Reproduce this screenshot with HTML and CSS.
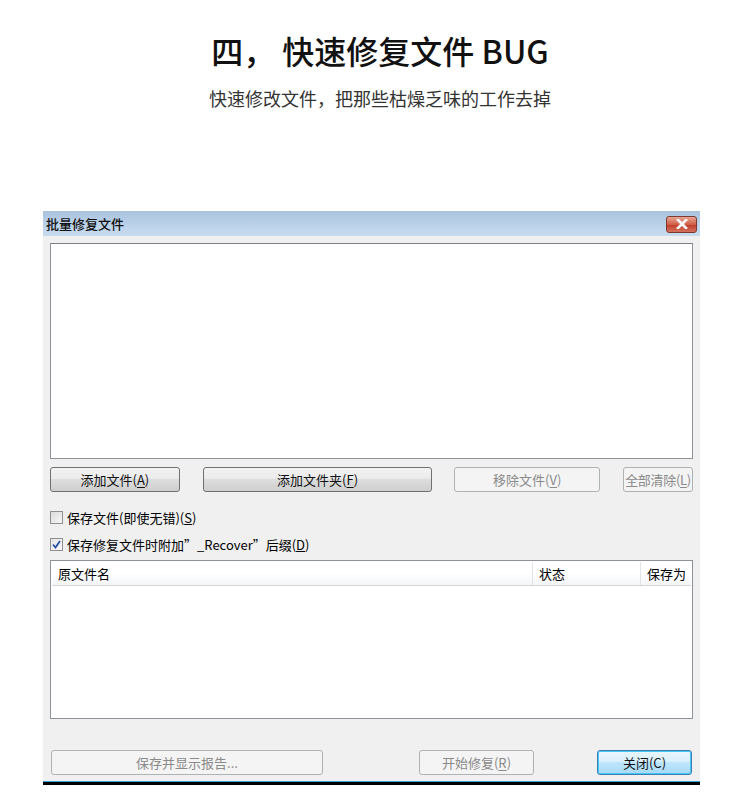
FILE: index.html
```html
<!DOCTYPE html>
<html lang="zh-CN">
<head>
  <meta charset="UTF-8" />
  <title>快速修复文件 BUG</title>
  <link rel="stylesheet" href="styles.css">
</head>
<body>

  <div class="intro">
    <h1>四， 快速修复文件 BUG</h1>
    <p class="subtitle">快速修改文件，把那些枯燥乏味的工作去掉</p>
  </div>

  <div class="dialog">
    <div class="titlebar">
      <span class="title">批量修复文件</span>
      <span class="close-btn">
        <svg width="14" height="10" viewBox="0 0 14 10">
          <path d="M3 1 L11 9 M11 1 L3 9" stroke="#fff" stroke-width="2.6" stroke-linecap="square" />
        </svg>
      </span>
    </div>

    <div class="dialog-body">
      <div class="file-box"></div>

      <div class="button-row">
        <button class="btn btn-add">添加文件(<u>A</u>)</button>
        <button class="btn btn-folder">添加文件夹(<u>F</u>)</button>
        <button class="btn btn-remove" disabled>移除文件(<u>V</u>)</button>
        <button class="btn btn-clear" disabled>全部清除(<u>L</u>)</button>
      </div>

      <label class="check"><span class="box"></span>保存文件(即使无错)(<u>S</u>)</label>
      <label class="check"><span class="box checked">
        <svg width="9" height="9" viewBox="0 0 9 9"><path d="M1 4.5 L3.5 7.5 L8 1" fill="none" stroke="#2a4fa8" stroke-width="1.8" /></svg>
      </span>保存修复文件时附加”_Recover”后缀(<u>D</u>)</label>

      <div class="list-view">
        <div class="list-header">
          <div class="col col-name">原文件名</div>
          <div class="col col-status">状态</div>
          <div class="col col-save">保存为</div>
        </div>
      </div>

      <div class="footer">
        <button class="btn btn-report" disabled>保存并显示报告...</button>
        <button class="btn btn-start" disabled>开始修复(<u>R</u>)</button>
        <button class="btn btn-close default">关闭(C)</button>
      </div>
    </div>
  </div>

</body>
</html>
```

FILE: styles.css
```css
* {
  box-sizing: border-box;
  margin: 0;
  padding: 0;
}

body {
  font-family: "Noto Sans CJK SC", "Noto Sans", sans-serif;
  background-color: #ffffff;
  color: #000;
  width: 750px;
}

.intro {
  text-align: center;
  padding-top: 27px;
  padding-left: 10px;
}

h1 {
  font-size: 32px;
  font-weight: 500;
  line-height: 46px;
  color: #111;
}

.subtitle {
  font-size: 18px;
  color: #333;
  margin-top: 12px;
  line-height: 26px;
}

.dialog {
  margin-top: 100px;
  margin-left: 43px;
  width: 657px;
  height: 574px;
  background-color: #f0f0f0;
  border-bottom: 3px solid #000;
  box-shadow: inset 0 -1px 0 #3aa0d8;
}

.titlebar {
  height: 25px;
  display: flex;
  align-items: center;
  justify-content: space-between;
  padding: 0 3px 0 3px;
  background: linear-gradient(#a9c3de, #bdd3ea 60%, #c8dcef);
}

.title {
  font-size: 13px;
  font-weight: 500;
  color: #111;
}

.close-btn {
  width: 31px;
  height: 17px;
  display: flex;
  align-items: center;
  justify-content: center;
  border: 1px solid #7a3a30;
  border-radius: 3px;
  background: linear-gradient(#e8a592, #d35f48 50%, #c0412c 55%, #d4735f);
  margin-top: 1px;
}

.dialog-body {
  padding: 7px 7px 0 7px;
}

.file-box {
  height: 216px;
  background-color: #fff;
  border: 1px solid #8e9399;
  border-top-color: #7a7f86;
}

.button-row {
  display: flex;
  margin-top: 8px;
  height: 25px;
}

.btn {
  font-family: inherit;
  font-size: 13px;
  color: #111;
  height: 25px;
  border: 1px solid #707070;
  border-radius: 3px;
  background: linear-gradient(#f2f2f2, #ebebeb 45%, #dddddd 50%, #cfcfcf);
}

.btn u {
  text-underline-offset: 2px;
}

.btn:disabled {
  color: #8a8a8a;
  border-color: #adb2b5;
  background: #f4f4f4;
}

.btn-add {
  width: 130px;
}

.btn-folder {
  width: 230px;
  margin-left: 23px;
}

.btn-remove {
  width: 146px;
  margin-left: 22px;
}

.btn-clear {
  width: 70px;
  margin-left: 23px;
  padding: 0;
  letter-spacing: -0.3px;
}

.check {
  display: flex;
  align-items: center;
  font-size: 13px;
  height: 18px;
  margin-top: 8px;
}

.check + .check {
  margin-top: 9px;
}

.button-row + .check {
  margin-top: 16px;
}

.box {
  width: 13px;
  height: 13px;
  border: 1px solid #8f8f8f;
  background: linear-gradient(135deg, #dcdcdc, #f6f6f6);
  margin-right: 4px;
  display: flex;
  align-items: center;
  justify-content: center;
}

.box.checked {
  background: linear-gradient(135deg, #e4e4e4, #fafafa);
}

.list-view {
  margin-top: 7px;
  height: 159px;
  background-color: #fff;
  border: 1px solid #8e9399;
  padding: 1px;
}

.list-header {
  display: flex;
  height: 24px;
  font-size: 13px;
  background: linear-gradient(#ffffff 50%, #f4f5f7);
  border-bottom: 1px solid #d5d5d5;
}

.col {
  padding-left: 6px;
  line-height: 24px;
  border-right: 1px solid #e2e3e5;
}

.col-name {
  width: 481px;
}

.col-status {
  width: 108px;
}

.col-save {
  flex: 1;
  border-right: none;
}

.footer {
  display: flex;
  margin-top: 31px;
}

.btn-report {
  width: 272px;
  margin-left: 1px;
}

.btn-start {
  width: 115px;
  margin-left: 96px;
}

.btn-close {
  width: 95px;
  margin-left: 63px;
}

.btn.default {
  border: 1px solid #3c7fb1;
  box-shadow: inset 0 0 0 1px #48c6f7;
  background: linear-gradient(#eaf6fd, #d9f0fc 45%, #bee6fd 50%, #a7d9f5);
}
```
